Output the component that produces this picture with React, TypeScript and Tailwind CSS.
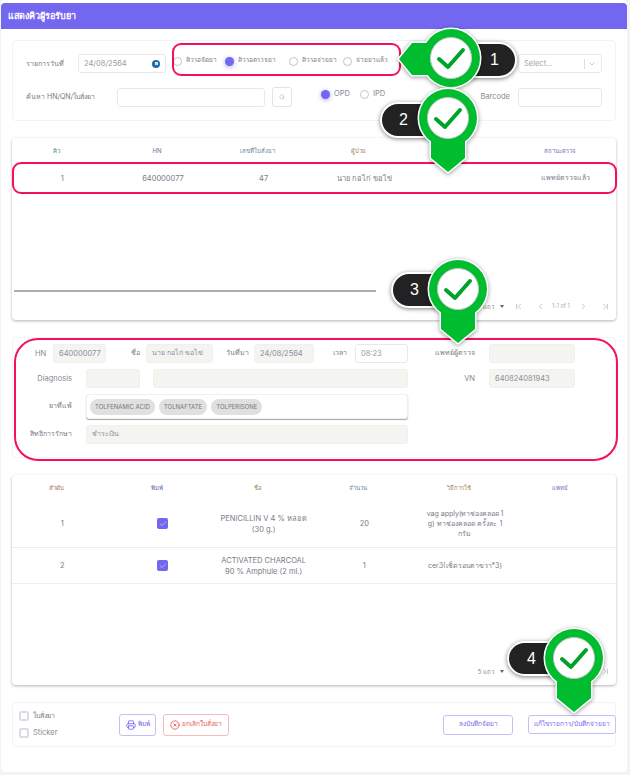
import React from 'react';
import { Check, ChevronDown, ChevronFirst, ChevronLast, ChevronLeft, ChevronRight, CircleX, Printer, Search } from 'lucide-react';

const label = 'text-[7px] text-[#7b7986] whitespace-nowrap';
const latinLabel = 'text-[7.5px] text-[#8a8894] whitespace-nowrap';
const smallLabel = 'text-[6.5px] text-[#7b7986] whitespace-nowrap';
const inputBox = 'h-[19px] rounded-[3px] border border-[#e9e8ec] bg-white text-[7.5px] text-[#9a98a3] flex items-center px-[5px] whitespace-nowrap';
const filled = 'h-[19px] rounded-[3px] border border-[#f0f0ec] bg-[#f4f4f1] text-[7.5px] text-[#8f8d99] flex items-center px-[5px] whitespace-nowrap';
const card = 'w-[604px] ml-[11px] bg-white rounded-[4px] border border-[#f3f3f3]';
const tableCard = 'w-[604px] ml-[11px] bg-white rounded-[4px] shadow-[0_1px_3px_rgba(0,0,0,0.3)] flex flex-col';
const rowText = 'text-[7.5px] text-[#7b7986]';

const Radio: React.FC<{ on?: boolean; text: string; tone?: string }> = ({ on, text, tone }) => (
  <div className="flex items-center gap-[4px]">
    {on ? (
      <span className="w-[9px] h-[9px] rounded-full bg-[#7367f0] shadow-[0_1px_4px_rgba(115,103,240,0.6)]" />
    ) : (
      <span className="w-[9px] h-[9px] rounded-full border border-[#c3c2cb] bg-white" />
    )}
    <span className={tone ?? smallLabel}>{text}</span>
  </div>
);

const Pagination: React.FC<{ rows: string }> = ({ rows }) => (
  <div className="h-[28px] flex items-center justify-end text-[#9a9a9a] pr-[6px]">
    <span className="text-[6px] text-[#888]">{rows}</span>
    <span className="ml-[6px] w-0 h-0 border-x-[2.5px] border-x-transparent border-t-[3px] border-t-[#666]" />
    <ChevronFirst className="ml-[10px] w-[9px] h-[9px]" strokeWidth={1.5} />
    <ChevronLeft className="ml-[13px] w-[9px] h-[9px]" strokeWidth={1.5} />
    <span className="ml-[7px] w-[18px] text-[5.5px] text-[#aaa] whitespace-nowrap">1-1 of 1</span>
    <ChevronRight className="ml-[9px] w-[9px] h-[9px]" strokeWidth={1.5} />
    <ChevronLast className="ml-[13px] w-[9px] h-[9px]" strokeWidth={1.5} />
  </div>
);

const HeadCell: React.FC<{ text: string; color: string }> = ({ text, color }) => (
  <div className={`pr-3 text-center text-[6px] ${color}`}>{text}</div>
);

const Tick: React.FC = () => (
  <div className="flex justify-center">
    <span className="w-[11px] h-[11px] rounded-[2px] bg-[#7367f0] flex items-center justify-center">
      <Check className="w-[8px] h-[8px] text-white/70" />
    </span>
  </div>
);

const PinShapes: React.FC<{ d: string; cx: number; cy: number }> = ({ d, cx, cy }) => (
  <>
    <path d={d} fill="#fff" stroke="#fff" strokeWidth={3} strokeLinejoin="round" />
    <circle cx={cx} cy={cy} r={29} fill="#fff" stroke="#fff" strokeWidth={3} />
    <path d={d} fill="#00bc2f" />
    <circle cx={cx} cy={cy} r={29} fill="#00bc2f" />
    <circle cx={cx} cy={cy} r={20.5} fill="#fff" stroke="#c9c9c9" strokeWidth={1} />
    <path
      d={`M${cx - 12} ${cy + 1}L${cx - 3} ${cy + 9}L${cx + 12} ${cy - 8}`}
      fill="none"
      stroke="#00a32a"
      strokeWidth={4}
      strokeLinecap="round"
      strokeLinejoin="round"
    />
  </>
);

// green marker pointing down
const PinDown: React.FC<{ className: string }> = ({ className }) => (
  <svg className={`absolute z-20 drop-shadow-[0_1px_2px_rgba(0,0,0,0.4)] ${className}`} width="70" height="92" viewBox="0 0 70 92">
    <PinShapes d="M18 32H52V72L35 86L18 72Z" cx={35} cy={32} />
  </svg>
);

// green marker pointing left
const PinLeft: React.FC<{ className: string }> = ({ className }) => (
  <svg className={`absolute z-20 drop-shadow-[0_1px_2px_rgba(0,0,0,0.4)] ${className}`} width="92" height="70" viewBox="0 0 92 70">
    <PinShapes d="M3 36L16 20H55V52H16Z" cx={55} cy={35} />
  </svg>
);

const Pill: React.FC<{ n: string; className: string }> = ({ n, className }) => (
  <div className={`absolute z-10 flex items-center rounded-full bg-[#222222] border-2 border-white shadow-[0_1px_4px_rgba(0,0,0,0.5)] text-white text-[16px] font-['Liberation_Sans',sans-serif] ${className}`}>
    {n}
  </div>
);

const App: React.FC = () => {
  return (
    <div className="relative w-[630px] h-[775px] overflow-hidden bg-[#f3f3f3] font-['Inter','Noto_Sans',sans-serif]">
      <div className="ml-[1px] w-[626px] h-[772px] bg-white rounded-[4px] pt-[3px]">
        <div className="h-[26px] bg-[#7367f0] rounded-t-[4px] flex items-center pl-[7px] text-[9px] font-semibold text-white">
          แสดงคิวผู้รอรับยา
        </div>

        {/* filter card */}
        <div className={`${card} mt-[11px] h-[81px] relative`}>
          <div className="flex items-start pt-[13px] pl-[13px]">
            <span className={`${label} w-[52px] mt-[5px]`}>รายการวันที่</span>
            <div className={`${inputBox} w-[88px] justify-between`}>
              <span>24/08/2564</span>
              <span className="w-[8px] h-[8px] rounded-full bg-[#1f6ca8] flex items-center justify-center">
                <span className="w-[3px] h-[3px] bg-white/80" />
              </span>
            </div>
            <div className="flex items-center ml-[7px] h-[12px] mt-[1px]">
              <div className="w-[52px]"><Radio text="คิวรอจัดยา" /></div>
              <div className="w-[64px]"><Radio on text="คิวรอตรวจยา" /></div>
              <div className="w-[54px]"><Radio text="คิวรอจ่ายยา" /></div>
              <Radio text="จ่ายยาแล้ว" />
            </div>
            <span className={`${smallLabel} ml-auto mt-[5px] mr-[9px]`}>จากแผนก</span>
            <div className={`${inputBox} w-[84px] mr-[13px] justify-between`}>
              <span className="text-[#a5a3ae]">Select...</span>
              <span className="flex items-center border-l border-[#ddd] pl-[3px] h-[10px]">
                <ChevronDown className="w-[8px] h-[8px] text-[#aaa]" />
              </span>
            </div>
          </div>
          <div className="flex items-center pt-[14px] pl-[13px]">
            <span className={`${label} w-[91px]`}>ค้นหา HN/QN/ใบสั่งยา</span>
            <div className={`${inputBox} w-[148px]`} />
            <div className="ml-[7px] w-[20px] h-[20px] rounded-[3px] border border-[#e3e3e6] flex items-center justify-center">
              <Search className="w-[6px] h-[6px] text-[#aaa]" />
            </div>
            <div className="ml-[29px] mb-[6px] flex items-center gap-[10px]">
              <Radio on text="OPD" tone={latinLabel} />
              <Radio text="IPD" tone={latinLabel} />
            </div>
            <span className={`${latinLabel} ml-auto mr-[8px]`}>Barcode</span>
            <div className={`${inputBox} w-[84px] mr-[13px]`} />
          </div>
        </div>

        {/* queue table */}
        <div className={`${tableCard} mt-[17px] h-[182px]`}>
          <div className="grid grid-cols-6 h-[24px] items-center">
            <HeadCell text="คิว" color="text-[#3c8f74]" />
            <HeadCell text="HN" color="text-[#5d6f9c]" />
            <HeadCell text="เลขที่ใบสั่งยา" color="text-[#6b7fa8]" />
            <HeadCell text="ผู้ป่วย" color="text-[#a5855a]" />
            <HeadCell text="แผนก" color="text-[#a5855a]" />
            <HeadCell text="สถานะตรวจ" color="text-[#7b6fb5]" />
          </div>
          <div className={`grid grid-cols-6 h-[32px] pt-[1px] items-center text-center ${rowText}`}>
            <div>1</div>
            <div>640000077</div>
            <div>47</div>
            <div>นาย กอไก่ ขอไข่</div>
            <div />
            <div className="text-[7px]">แพทย์ตรวจแล้ว</div>
          </div>
          <div className="flex-1 flex flex-col justify-end">
            <div className="ml-[2px] w-[362px] h-[2px] bg-[#adadad]" />
          </div>
          <Pagination rows="5 แถว" />
        </div>

        {/* patient form */}
        <div className={`${card} mt-[17px] h-[121px] pt-[6px] flex flex-col gap-[6px]`}>
          <div className="flex items-center">
            <span className={`${latinLabel} ml-[22px] w-[18px]`}>HN</span>
            <div className={`${filled} w-[53px]`}>640000077</div>
            <span className={`${label} ml-[25px] w-[15px]`}>ชื่อ</span>
            <div className={`${filled} w-[67px] text-[7px]`}>นาย กอไก่ ขอไข่</div>
            <span className={`${label} ml-[13px] w-[28px]`}>วันที่มา</span>
            <div className={`${filled} w-[60px]`}>24/08/2564</div>
            <span className={`${label} ml-[19px] w-[22px]`}>เวลา</span>
            <div className={`${inputBox} w-[53px]`}>08:23</div>
            <span className={`${label} w-[67px] text-right`}>แพทย์ผู้ตรวจ</span>
            <div className={`${filled} ml-[14px] w-[86px]`} />
          </div>
          <div className="flex items-center">
            <span className={`${latinLabel} w-[59px] text-right`}>Diagnosis</span>
            <div className={`${filled} ml-[14px] w-[54px]`} />
            <div className={`${filled} ml-[13px] w-[255px]`} />
            <span className={`${latinLabel} w-[67px] text-right`}>VN</span>
            <div className={`${filled} ml-[14px] w-[86px]`}>640824081943</div>
          </div>
          <div className="flex items-center">
            <span className={`${label} w-[59px] text-right`}>ยาที่แพ้</span>
            <div className="ml-[14px] w-[322px] h-[25px] rounded-[3px] bg-white shadow-[0_1px_1px_rgba(0,0,0,0.35)] border border-[#f0f0f0] flex items-center gap-[4px] pl-[3px]">
              {['TOLFENAMIC ACID', 'TOLNAFTATE', 'TOLPERISONE'].map(drug => (
                <span key={drug} className="h-[16px] px-[5px] rounded-full bg-[#e0e0e0] text-[6px] text-[#777] flex items-center whitespace-nowrap">
                  {drug}
                </span>
              ))}
            </div>
          </div>
          <div className="flex items-center">
            <span className={`${label} w-[59px] text-right`}>สิทธิการรักษา</span>
            <div className={`${filled} ml-[14px] w-[322px] text-[7px]`}>ชำระเงิน</div>
          </div>
        </div>

        {/* drug table */}
        <div className={`${tableCard} mt-[17px] h-[210px]`}>
          <div className="grid grid-cols-6 h-[25px] items-center">
            <HeadCell text="ลำดับ" color="text-[#a56a5a]" />
            <HeadCell text="พิมพ์" color="text-[#5d6f9c]" />
            <HeadCell text="ชื่อ" color="text-[#a5855a]" />
            <HeadCell text="จำนวน" color="text-[#6b7fa8]" />
            <HeadCell text="วิธีการใช้" color="text-[#a5855a]" />
            <HeadCell text="แพทย์" color="text-[#7b6fb5]" />
          </div>
          <div className={`grid grid-cols-6 h-[48px] items-center text-center leading-[11px] border-b border-[#ececec] ${rowText}`}>
            <div>1</div>
            <Tick />
            <div className="whitespace-nowrap">
              PENICILLIN V 4 % หลอด
              <br />
              (30 g.)
            </div>
            <div>20</div>
            <div className="leading-[10px] text-[7px] whitespace-nowrap">
              vag apply(ทาช่องคลอด1
              <br />
              g) ทาช่องคลอด ครั้งละ 1
              <br />
              กรัม
            </div>
            <div />
          </div>
          <div className={`grid grid-cols-6 h-[36px] items-center text-center leading-[11px] border-b border-[#ececec] ${rowText}`}>
            <div>2</div>
            <Tick />
            <div className="whitespace-nowrap">
              ACTIVATED CHARCOAL
              <br />
              90 % Amphule (2 ml.)
            </div>
            <div>1</div>
            <div className="text-[7px]">cer3(เช็ดรอบตาขวา*3)</div>
            <div />
          </div>
          <div className="flex-1 flex flex-col justify-end">
            <Pagination rows="5 แถว" />
          </div>
        </div>

        {/* actions */}
        <div className={`${card} mt-[17px] h-[45px] flex items-center pl-[6px]`}>
          <div className="flex flex-col gap-[6px] w-[100px]">
            <label className="flex items-center gap-[4px]">
              <span className="w-[10px] h-[10px] rounded-[2px] border-2 border-[#d8dce3]" />
              <span className={label}>ใบสั่งยา</span>
            </label>
            <label className="flex items-center gap-[4px]">
              <span className="w-[10px] h-[10px] rounded-[2px] border-2 border-[#d8dce3]" />
              <span className={latinLabel}>Sticker</span>
            </label>
          </div>
          <button className="w-[37px] h-[22px] rounded-[3px] border border-[#c4bffa] text-[#7367f0] text-[6.5px] font-medium flex items-center justify-center gap-[2px]">
            <Printer className="w-[10px] h-[10px]" />
            พิมพ์
          </button>
          <button className="ml-[7px] w-[66px] h-[22px] rounded-[3px] border border-[#f7bcbc] text-[#ea5455] text-[6.5px] font-medium flex items-center justify-center gap-[2px]">
            <CircleX className="w-[10px] h-[10px]" />
            ยกเลิกใบสั่งยา
          </button>
          <button className="ml-auto w-[70px] h-[20px] rounded-[3px] border border-[#c4bffa] text-[#7367f0] text-[6.5px] font-medium">
            ลงบันทึกจัดยา
          </button>
          <button className="ml-[15px] -mr-px w-[88px] h-[19px] rounded-[3px] border border-[#c4bffa] text-[#7367f0] text-[6.5px] font-medium whitespace-nowrap">
            แก้ไขรายการ/บันทึกจ่ายยา
          </button>
        </div>
      </div>

      {/* red callout frames */}
      <div className="absolute z-[5] left-[172px] top-[43px] w-[229px] h-[33px] rounded-[9px] border-2 border-[#f5105f] pointer-events-none" />
      <div className="absolute z-[5] left-[12px] top-[162px] w-[605px] h-[32px] rounded-[9px] border-2 border-[#f5105f] pointer-events-none" />
      <div className="absolute z-[5] left-[14px] top-[338px] w-[604px] h-[123px] rounded-[24px] border-2 border-[#f5105f] pointer-events-none" />

      {/* numbered markers */}
      <Pill n="1" className="left-[440px] top-[42px] w-[77px] h-[36px] justify-end pr-[16px]" />
      <PinLeft className="left-[396px] top-[23px]" />
      <Pill n="2" className="left-[380px] top-[102px] w-[80px] h-[36px] pl-[17px]" />
      <PinDown className="left-[413px] top-[86px]" />
      <Pill n="3" className="left-[391px] top-[272px] w-[80px] h-[36px] pl-[17px]" />
      <PinDown className="left-[423px] top-[257px]" />
      <Pill n="4" className="left-[507px] top-[641px] w-[80px] h-[35px] pl-[18px]" />
      <PinDown className="left-[539px] top-[626px]" />
    </div>
  );
};

export default App;
